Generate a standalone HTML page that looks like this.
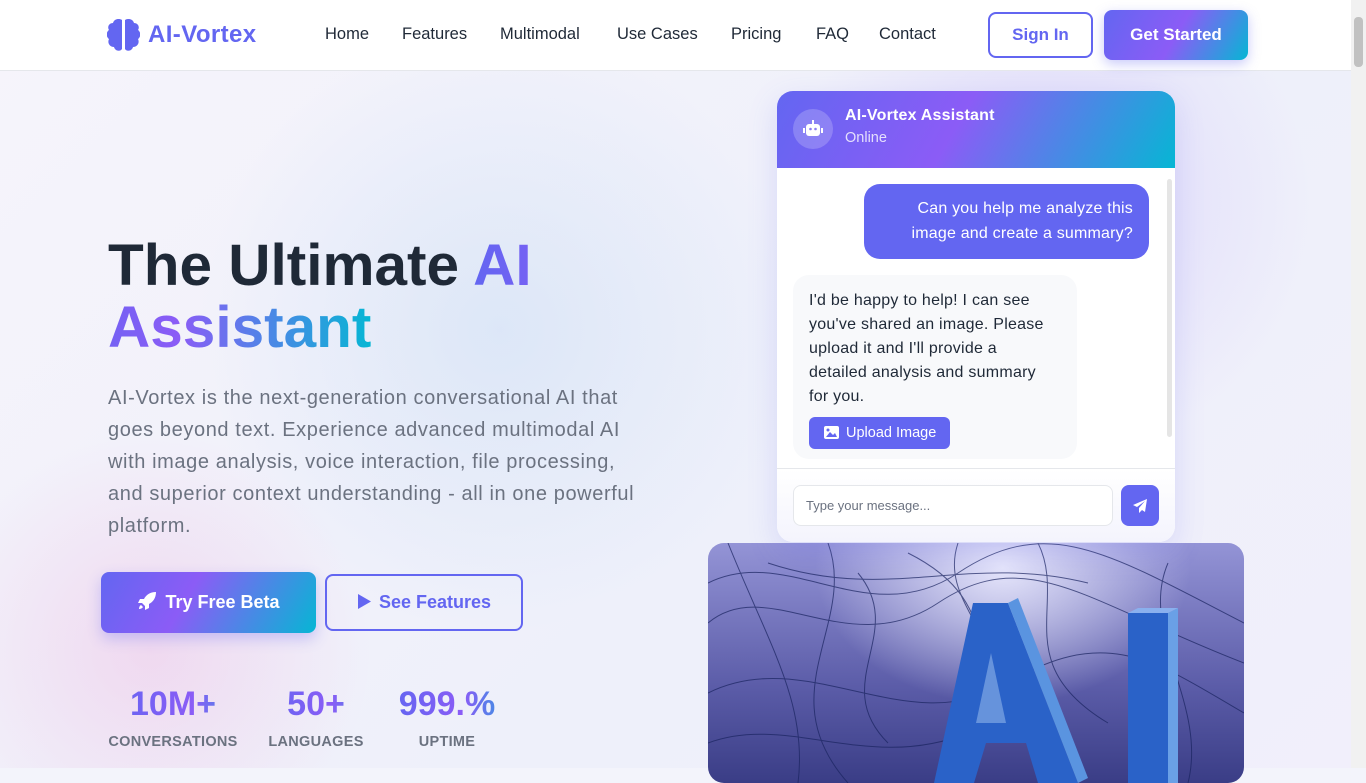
<!DOCTYPE html>
<html><head><meta charset="utf-8"><style>
*{box-sizing:border-box;margin:0;padding:0}
body{width:1366px;height:768px;overflow:hidden;font-family:"Liberation Sans",sans-serif;background:#f3f4fb;position:relative}
.bg{position:absolute;inset:0;background:radial-gradient(circle at 150px 650px,rgba(236,170,220,.35),transparent 220px),radial-gradient(circle at 1050px 200px,rgba(190,170,250,.35),transparent 260px),radial-gradient(circle at 500px 330px,rgba(200,220,245,.5),transparent 300px),linear-gradient(135deg,#f6f4fb,#eef0fa 60%,#f1effb)}
nav{position:absolute;left:0;top:0;width:1351px;height:71px;background:#fff;border-bottom:1px solid #e5e7eb}
.logo{position:absolute;left:148px;top:21px;font-size:24px;font-weight:bold;color:#6366f1;letter-spacing:.4px}
.links a{position:absolute;top:25px;font-size:16.5px;color:#1f2937;text-decoration:none}
.btn-o{position:absolute;left:988px;top:12px;width:105px;height:46px;border:2px solid #6366f1;border-radius:8px;color:#6366f1;font-weight:bold;font-size:17px;text-align:center;line-height:42px;background:#fff}
.btn-g{position:absolute;left:1104px;top:10px;width:144px;height:50px;border-radius:8px;color:#fff;font-weight:bold;font-size:17px;text-align:center;line-height:50px;background:linear-gradient(120deg,#6366f1,#8b5cf6 50%,#06b6d4);box-shadow:0 4px 12px rgba(99,102,241,.35)}
h1{position:absolute;left:108px;top:235px;font-size:58.5px;line-height:62px;color:#1f2937;letter-spacing:0}
.grad{background:linear-gradient(90deg,#6366f1,#8b5cf6 40%,#06b6d4 100%);-webkit-background-clip:text;background-clip:text;color:transparent}
p.lead{position:absolute;left:108px;top:382px;width:548px;font-size:20px;line-height:32px;color:#6b7280;letter-spacing:.6px}
.b1{position:absolute;left:101px;top:572px;width:215px;height:61px;border-radius:8px;background:linear-gradient(120deg,#6366f1,#8b5cf6 40%,#06b6d4);color:#fff;font-weight:bold;font-size:18px;line-height:61px;text-align:center;box-shadow:0 6px 14px rgba(99,102,241,.3)}
.b2{position:absolute;left:325px;top:574px;width:198px;height:57px;border-radius:8px;border:2px solid #6366f1;color:#6366f1;font-weight:bold;font-size:18px;line-height:53px;text-align:center}
.stat{position:absolute;top:685px;text-align:center}
.stat b{display:block;font-size:34px;background:linear-gradient(90deg,#6366f1,#8b5cf6,#06b6d4 130%);-webkit-background-clip:text;background-clip:text;color:transparent}
.stat span{display:block;margin-top:10px;font-size:14.5px;font-weight:bold;color:#6b7280;letter-spacing:.3px}
.img{position:absolute;left:708px;top:543px;width:536px;height:240px;border-radius:16px;overflow:hidden;background:radial-gradient(ellipse at 55% 10%,#e6e6fb,transparent 45%),linear-gradient(180deg,#9494d6,#5b5ca8 60%,#3a3d86)}
.chat{position:absolute;left:777px;top:91px;width:398px;height:451px;background:#fff;border-radius:16px;overflow:hidden;box-shadow:0 10px 30px rgba(99,102,241,.18)}
.ch{height:77px;background:linear-gradient(120deg,#6366f1,#8b5cf6 45%,#06b6d4);position:relative;color:#fff}
.av{position:absolute;left:16px;top:18px;width:40px;height:40px;border-radius:50%;background:rgba(255,255,255,.2)}
.m1{position:absolute;left:87px;top:93px;width:285px;height:75px;border-radius:16px;background:#6366f1;color:#fff;font-size:16px;line-height:25px;text-align:right;padding:12px 16px;letter-spacing:.2px}
.m2{position:absolute;left:16px;top:184px;width:284px;height:184px;border-radius:16px;background:#f8f9fb;color:#1f2937;font-size:16px;line-height:24px;padding:14px 20px 12px 16px;letter-spacing:.25px}
.up{margin-top:8px;width:141px;height:32px;border-radius:6px;background:#6366f1;color:#fff;font-size:14.5px;line-height:32px;padding-left:37px;position:relative;letter-spacing:0}
.inp{position:absolute;left:16px;top:394px;width:320px;height:41px;border:1px solid #e5e7eb;border-radius:8px;font-size:13px;color:#6b7280;line-height:39px;padding-left:12px}
.send{position:absolute;left:344px;top:394px;width:38px;height:41px;border-radius:8px;background:#6366f1}
</style></head><body>
<div class="bg"></div>
<div style="position:absolute;left:1351px;top:0;width:15px;height:768px;background:#f1f1f1"><div style="position:absolute;left:3px;top:17px;width:9px;height:50px;background:#c1c1c1;border-radius:4px"></div></div>
<nav>
<svg style="position:absolute;left:107px;top:18px" width="33" height="34" viewBox="0 0 33 34"><path fill="#6366f1" d="M15 2c-3-2-8-1-9 3-4 0-6 4-4 7-3 2-3 7 0 9-2 4 1 8 5 8 1 4 6 5 8 2zM18 2c3-2 8-1 9 3 4 0 6 4 4 7 3 2 3 7 0 9 2 4-1 8-5 8-1 4-6 5-8 2z"/></svg>
<div class="logo">AI-Vortex</div>
<div class="links"><a style="left:325px">Home</a><a style="left:402px">Features</a><a style="left:500px">Multimodal</a><a style="left:617px">Use Cases</a><a style="left:731px">Pricing</a><a style="left:816px">FAQ</a><a style="left:879px">Contact</a></div>
<div class="btn-o">Sign In</div><div class="btn-g">Get Started</div>
</nav>
<h1>The Ultimate <span class="grad">AI<br>Assistant</span></h1>
<p class="lead">AI-Vortex is the next-generation conversational AI that goes beyond text. Experience advanced multimodal AI with image analysis, voice interaction, file processing, and superior context understanding - all in one powerful platform.</p>
<div class="b1"><svg width="20" height="20" viewBox="0 0 20 20" style="vertical-align:-3px;margin-right:8px"><path fill="#fff" d="M19 1c-6 0-10 3-12 7H3l-2 4h4l3 3v4l4-2v-4c4-2 7-6 7-12zM4 14c-2 1-2 4-2 4s3 0 4-2z"/></svg>Try Free Beta</div>
<div class="b2"><svg width="15" height="17" viewBox="0 0 15 17" style="vertical-align:-2px;margin-right:7px"><path fill="#6366f1" d="M1 1l13 7.5L1 16z"/></svg>See Features</div>
<div class="stat" style="left:108px;width:130px"><b>10M+</b><span>CONVERSATIONS</span></div>
<div class="stat" style="left:266px;width:100px"><b>50+</b><span>LANGUAGES</span></div>
<div class="stat" style="left:394px;width:106px"><b>999.%</b><span>UPTIME</span></div>
<div class="img"><svg width="536" height="240" viewBox="0 0 536 240">
<g fill="none" stroke="#1a2460" stroke-width="1" opacity=".7">
<path d="M0 40C80 0 160 90 250 30S400 10 536 80"/><path d="M0 80C60 30 140 120 230 60S380 60 536 120"/><path d="M20 0C60 100 100 160 90 240"/><path d="M120 0C150 80 60 150 140 240"/><path d="M200 10C300 60 250 120 330 200"/><path d="M0 150C100 100 200 200 300 140S450 120 536 170"/><path d="M60 20C180 60 260 10 380 40"/><path d="M330 0C360 60 300 120 400 180"/><path d="M0 200C80 170 160 230 260 190"/><path d="M150 30C200 90 120 140 180 200"/><path d="M250 0C230 60 300 90 280 160"/><path d="M460 20C430 90 500 160 480 240"/></g>
<path fill="#2a62c8" d="M265 60h35l70 180h-40l-12-40h-40l-12 40h-40z"/><path fill="#5a94e0" d="M300 60l10-5 70 180-10 5z"/><path fill="#8fb4ea" d="M283 110l-15 70h30z" opacity=".6"/>
<path fill="#2a62c8" d="M420 70h40v170h-40z"/><path fill="#6aa0e6" d="M460 70l10-5v175h-10z"/><path fill="#8ab0ee" d="M420 70l10-5h40l-10 5z"/>
</svg></div>
<div class="chat">
<div class="ch"><div class="av"><svg style="position:absolute;left:10px;top:11px" width="20" height="18" viewBox="0 0 20 18"><rect x="3" y="4" width="14" height="12" rx="3" fill="#fff"/><rect x="9" y="0" width="2" height="4" fill="#fff"/><rect x="0" y="8" width="2" height="5" fill="#fff"/><rect x="18" y="8" width="2" height="5" fill="#fff"/><circle cx="7.5" cy="9" r="1.3" fill="#8b7cf0"/><circle cx="12.5" cy="9" r="1.3" fill="#8b7cf0"/></svg></div>
<div style="position:absolute;left:68px;top:16px;font-weight:bold;font-size:16px;letter-spacing:.2px">AI-Vortex Assistant</div>
<div style="position:absolute;left:68px;top:39px;font-size:14.5px;opacity:.8">Online</div></div>
<div style="position:absolute;left:390px;top:88px;width:5px;height:258px;background:#e5e5e5;border-radius:3px"></div>
<div class="m1">Can you help me analyze this image and create a summary?</div>
<div class="m2">I'd be happy to help! I can see you've shared an image. Please upload it and I'll provide a detailed analysis and summary for you.<div class="up"><svg style="position:absolute;left:15px;top:9px" width="15" height="13" viewBox="0 0 15 13"><rect width="15" height="13" rx="2" fill="#fff"/><path d="M2 11l4-5 3 3 2-2 2 4z" fill="#6366f1"/><circle cx="4" cy="4" r="1.5" fill="#6366f1"/></svg>Upload Image</div></div>
<div style="position:absolute;left:0;top:377px;width:398px;height:74px;border-top:1px solid #e5e7eb;background:linear-gradient(#fff,#f4f4fd)"></div>
<div class="inp" style="background:#fff">Type your message...</div>
<div class="send"><svg style="position:absolute;left:12px;top:14px" width="14" height="14" viewBox="0 0 14 14"><path fill="#fff" d="M14 0L0 6l4 2 8-6-6 7v5l3-3 3 2z"/></svg></div>
</div>
</body></html>
